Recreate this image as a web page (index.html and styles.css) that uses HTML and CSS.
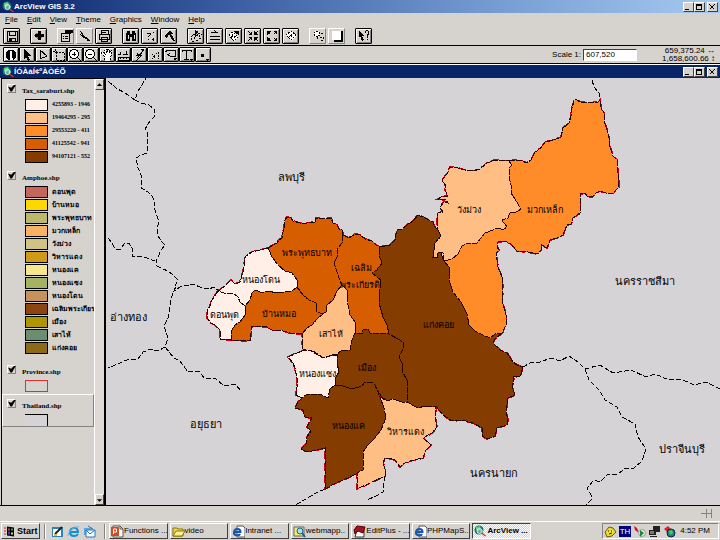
FILE: index.html
```html
<!DOCTYPE html>
<html lang="th">
<head>
<meta charset="utf-8">
<title>ArcView GIS 3.2</title>
<link rel="stylesheet" href="styles.css">
</head>
<body>
<svg class="defs" aria-hidden="true">
  <defs>
    <g id="globe"><circle cx="5" cy="5" r="4.5" fill="#176c70"/><path d="M2 2l4-1 1 3-3 2-2-1zM6 6l3-1-1 3z" fill="#58d66c"/><circle cx="5.500" cy="6" r="2.500" fill="#b7e4e5" fill-opacity=".5" stroke="#d5eeee"/><path d="M7.500 8l4 3" stroke="#d32" stroke-width="1.500"/></g>
    <g id="page"><path d="M2 1h7l3 3v8H2z" fill="#fff" stroke="#555"/><path d="M9 1v3h3" fill="none" stroke="#555"/></g>
    <g id="ie"><path d="M5 1h6l2 2v9H5z" fill="#fff" stroke="#555"/><path d="M1.500 7h7c0-4-6-4-6.500 0s5 4 6 2" fill="none" stroke="#1756b0" stroke-width="2"/></g>
    <g id="areas">
      <path class="c4" d="M268 248L277 243 279 240 282 238 283 232 284 228 285 220 287 217 291 218 293 221 300 223 307 223 315 222 316 218 323 219 331 218 333 223 337 225 339 229 342 230 343 235 342 243 338 248 337 257 334 263 337 272 339 278 342 285 337 291 333 300 327 305 326 312 323 314 317 312 316 303 309 300 303 295 297 287 297 280 292 273 285 271 278 265 272 257z"/>
      <path class="c1" d="M268 248L260 250 252 252 246 256 245 258 244 266 243 272 240 282 235 284 231 280 225 286 218 291 224 293 233 293 238 297 240 302 245 306 250 300 252 293 255 290 263 293 267 291 278 293 292 291 297 287 297 280 292 273 285 271 278 265 272 257z"/>
      <path class="c1" d="M218 291L212 300 210 306 207 311 207 318 211 323 215 325 220 330 220 339 231 340 231 332 235 325 240 322 246 314 245 306 240 302 238 297 233 293 224 293z"/>
      <path class="c4" d="M245 306L246 314 240 322 235 325 231 332 231 340 250 341 252 326 267 327 272 330 280 330 290 333 302 334 307 328 312 325 317 319 323 314 317 312 316 303 309 300 303 295 297 287 292 291 278 293 267 291 263 293 255 290 252 293 250 300z"/>
      <path class="c4" d="M343 235L349 238 352 236 355 234 360 235 365 239 372 241 376 245 380 247 379 255 382 263 377 270 372 273 377 277 381 280 380 289 379 303 383 317 387 325 389 334 380 333 370 333 368 329 363 330 362 334 355 333 355 322 350 315 348 305 347 290 342 285 339 278 337 272 334 263 337 257 338 248 342 243z"/>
      <path class="c2" d="M342 285L337 291 333 300 327 305 326 312 323 314 317 319 312 325 307 328 302 334 302 340 303 349 308 351 315 352 323 358 332 355 337 354 341 351 350 350 352 340 355 333 355 322 350 315 348 305 347 290z"/>
      <path class="c1" d="M288 357L297 353 302 351 310 350 316 354 323 358 330 356 337 355 337 363 339 372 336 377 335 385 330 389 328 398 320 394 307 394 302 398 296 395 297 387 297 378 295 368 293 363z"/>
      <path class="c5" d="M337 355L341 351 350 350 352 340 355 333 362 334 363 330 368 329 370 333 390 333 398 339 403 342 404 347 399 357 403 365 402 371 407 380 407 402 402 402 393 399 387 401 382 397 377 390 375 385 372 382 365 382 362 386 352 389 343 386 335 385 336 377 339 372 337 363z"/>
      <path class="c5" d="M335 385L330 389 328 398 320 394 307 394 302 398 298 402 295 408 303 410 305 417 312 418 309 423 307 427 311 431 307 437 306 444 301 449 305 451 312 451 325 448 325 489 336 483 350 477 363 470 363 452 368 445 375 438 381 430 386 418 384 408 380 397 377 390 375 385 372 382 365 382 362 386 352 389 343 386z"/>
      <path class="c2" d="M380 397L387 401 393 399 402 402 407 402 418 408 425 406 436 407 435 417 437 427 432 433 423 438 431 445 426 450 423 458 418 459 410 461 403 464 400 467 395 460 392 459 385 458 383 463 385 469 385 476 370 483 357 489 357 473 363 470 363 452 368 445 375 438 381 430 386 418 384 408z"/>
      <path class="c5" d="M418 215L413 221 407 225 402 229 398 230 395 236 395 240 390 245 380 247 379 255 382 263 377 270 372 273 377 277 381 280 380 289 379 303 383 317 387 325 389 334 398 339 403 342 404 347 399 357 403 365 402 371 407 380 407 402 418 408 425 406 437 407 443 415 452 421 462 420 473 423 482 428 482 436 487 439 495 436 497 428 507 425 508 420 506 412 508 398 515 395 512 387 514 380 513 376 520 377 523 367 517 365 513 362 507 353 500 350 493 343 495 339 502 333 495 334 490 338 483 335 475 331 469 325 467 314 461 302 453 292 449 280 450 268 443 260 441 252 437 253 437 257 433 257 434 250 435 243 441 236 438 230 434 226 433 222 425 218z"/>
      <path class="c2" d="M437 223L438 213 443 212 440 207 444 202 448 203 446 200 438 199 441 197 448 196 445 190 446 186 442 180 447 174 450 167 458 168 465 170 473 171 480 169 487 163 495 160 509 161 512 165 509 168 509 177 511 185 511 193 515 199 521 209 515 213 510 212 508 218 502 220 507 227 503 230 498 228 485 233 477 243 468 243 462 246 458 254 452 259 444 261 443 253 441 252 437 253 437 257 433 257 434 250 435 243 441 236 438 230z"/>
      <path class="c3" d="M509 161L515 160 522 161 527 163 531 160 535 152 542 147 545 142 554 140 561 137 563 128 569 123 571 116 572 108 574 101 576 99 580 102 589 103 598 102 600 100 601 108 604 113 604 121 607 130 609 138 610 147 613 156 617 160 618 174 619 187 613 193 606 193 600 191 596 193 592 197 587 196 585 193 580 194 580 213 573 218 571 224 567 225 563 235 557 238 550 240 547 248 545 247 541 244 541 250 538 254 528 252 517 251 511 244 505 241 498 242 497 247 499 250 496 253 498 267 502 277 503 290 502 300 506 315 506 325 502 333 495 334 490 338 483 335 475 331 469 325 467 314 461 302 453 292 449 280 450 268 444 261 452 259 458 254 462 246 468 243 477 243 485 233 498 228 503 230 507 227 502 220 508 218 510 212 515 213 521 209 515 199 511 193 511 185 509 177 509 168 512 165z"/>
    </g>
  </defs>
</svg>

<header class="titlebar">
  <svg class="i12" viewBox="0 0 12 12"><use href="#globe"/></svg>
  <h1>ArcView GIS 3.2</h1>
  <div class="winbtns">
    <button aria-label="Minimize"><svg viewBox="0 0 8 8"><path d="M1 6.500h4"/></svg></button>
    <button aria-label="Maximize"><svg viewBox="0 0 8 8"><path d="M1.500 1.500h5v5h-5zM1 2h6"/></svg></button>
    <button aria-label="Close" class="apart"><svg viewBox="0 0 8 8"><path d="M1.500 1.500l5 5m0-5l-5 5"/></svg></button>
  </div>
</header>

<nav class="menu">
  <button><u>F</u>ile</button><button><u>E</u>dit</button><button><u>V</u>iew</button><button><u>T</u>heme</button><button><u>G</u>raphics</button><button><u>W</u>indow</button><button><u>H</u>elp</button>
</nav>

<div class="toolbar">
  <div class="group">
    <button aria-label="Save"><svg viewBox="0 0 14 14"><path d="M2 2h10v10H2zM4 2v4h6V2M4 12V9h6v3" class="s2"/><path d="M5 10h2v2H5z"/></svg></button>
  </div>
  <div class="group">
    <button aria-label="Add theme"><svg viewBox="0 0 14 14"><path d="M2 6l5-3 5 3-5 6z" fill="#777"/><path d="M5.500 2h3v3h3v3h-3v3h-3V8h-3V5h3z"/></svg></button>
  </div>
  <div class="group">
    <button class="flat" aria-label="Theme properties"><svg viewBox="0 0 14 14"><path d="M2 4h8v8H2zM4 7h1m1 0h3M4 9h1m1 0h3" class="s"/><path d="M6 1h6v4l-3-1-3 1zM12 1h2v3h-2z"/></svg></button>
    <button class="flat" aria-label="Edit legend"><svg viewBox="0 0 14 14"><path d="M2 2l4 5 5 5M2 5l6 5" class="s2"/><path d="M8 8l4 4H9z"/></svg></button>
    <button aria-label="Open table"><svg viewBox="0 0 14 14"><path d="M4 5V1h7v4M2 5h10v5H2zM4 8h6v4H4zM5 3h4" class="s2"/></svg></button>
  </div>
  <div class="group">
    <button aria-label="Find"><svg viewBox="0 0 14 14"><path d="M3 2h3v3h2V2h3l1 4v6H8V8H6v4H2V6z"/><path d="M4 6v4m6-4v4" stroke="#ddd"/></svg></button>
    <button aria-label="Query"><svg viewBox="0 0 14 14"><path d="M4 4h3v2L5 8m0 2v1M10 3v1m-1 6h2m-1-1v3" class="s"/></svg></button>
    <button aria-label="Build query"><svg viewBox="0 0 14 14"><path d="M2 7l6-5 3 3-5 1-1 4z"/><path d="M8 5l4 7" class="s2 thick"/></svg></button>
  </div>
  <div class="group">
    <button aria-label="Zoom to full extent"><svg viewBox="0 0 14 14"><path d="M2 11l1-4 3-2 1 3 3-4 3 2M3 12h2m2-1h2m1-2h3M5 8v3m5-5v3" class="s dash"/><path d="M6 1l4 2-4 3z"/></svg></button>
    <button aria-label="Zoom to theme"><svg viewBox="0 0 14 14"><path d="M2 10h10M2 8l4-1 2 1 4-1" class="s"/><path d="M6 1l5 3H3v-1h4z"/></svg></button>
    <button aria-label="Zoom to selected"><svg viewBox="0 0 14 14"><path d="M1 6l5-3 6 5-5 4z" fill="#fff"/><path d="M2 6l4-3 5 5-4 4zM4 8l6-1M5 5l4 6" class="s dash"/><path d="M7 2h5v4L9 5z"/></svg></button>
    <button aria-label="Zoom in"><svg viewBox="0 0 14 14"><path d="M2 2l3 3m7-3L9 5M2 12l3-3m7 3L9 9" class="s2"/><path d="M6 2v4H2zM8 2v4h4zM2 8h4v4zM8 8h4l-4 4z"/></svg></button>
    <button aria-label="Zoom out"><svg viewBox="0 0 14 14"><path d="M2 2l3 3m7-3L9 5M2 12l3-3m7 3L9 9" class="s2"/><path d="M2 6V2h4zM12 6V2H8zM2 8v4h4zM12 8v4H8z"/></svg></button>
    <button aria-label="Previous extent"><svg viewBox="0 0 14 14"><path d="M1 6l6-4 6 4-6 6z" fill="#fff"/><path d="M2 6l5-4 5 4-5 5zM4 4l6 5M10 3L4 9" class="s dash"/></svg></button>
  </div>
  <div class="group">
    <button class="flat" aria-label="Select features"><svg viewBox="0 0 14 14"><circle cx="6" cy="5" r="3" fill="#fff"/><path d="M3 4l2-2 3 1 1 3-3 2-3-2zM6 8v3m4-7h2m-3 4h3v3H9" class="s dash"/></svg></button>
    <button class="flat" aria-label="Clear selection"><svg viewBox="0 0 14 14"><path d="M2 2h9v9H2z" fill="#fff"/><path d="M11 2h2v11H4v-2h7z"/></svg></button>
  </div>
  <div class="group">
    <button aria-label="Context help"><svg viewBox="0 0 14 14"><path d="M2 2l6 5H5l2 4-2 1-2-5-1 1z"/><path d="M8 4c0-3 4-3 4 0L10 7v2m0 1v1" class="s2"/></svg></button>
  </div>
</div>

<div class="tools">
  <div class="toolset">
    <button aria-label="Identify"><svg viewBox="0 0 14 14"><circle cx="7" cy="7" r="5.500"/><path d="M7 3v2m-1 1h1v5m-1 0h3" stroke="#fff" stroke-width="1.500" fill="none"/></svg></button>
    <button aria-label="Pointer"><svg viewBox="0 0 14 14"><path d="M4 1l7 7H8l2 4-2 1-2-4-2 2z"/></svg></button>
    <button aria-label="Vertex edit"><svg viewBox="0 0 14 14"><path d="M4 2l7 6-7 3z" class="s"/></svg></button>
    <button aria-label="Select feature"><svg viewBox="0 0 14 14"><path d="M4 4h8v8H4zM1 3h4M3 1v4" class="s dash"/></svg></button>
    <button aria-label="Zoom in tool"><svg viewBox="0 0 14 14"><circle cx="6" cy="6" r="4.500" fill="#fff" stroke="#000"/><path d="M4 6h4M6 4v4m3 1l4 4" class="s2"/></svg></button>
    <button aria-label="Zoom out tool"><svg viewBox="0 0 14 14"><circle cx="6" cy="6" r="4.500" fill="#fff" stroke="#000"/><path d="M4 6h4m1 3l4 4" class="s2"/></svg></button>
    <button aria-label="Pan"><svg viewBox="0 0 14 14"><path d="M4 8L1 5l2-1 2 2-1-4 2-1 1 4V1h2v4l2-3 1 1-1 5-1 5H5z" fill="#fff" stroke="#000" stroke-dasharray="2 1"/></svg></button>
    <button aria-label="Measure"><svg viewBox="0 0 14 14"><path d="M2 9h11v3H2zM4 9v2m3-2v2m3-2v2M2 6h3m2 0h5M4 4v3m6-4v3" class="s"/></svg></button>
    <button aria-label="Hot link"><svg viewBox="0 0 14 14"><path d="M9 1L5 6h3l-4 7 2-5H4z"/><path d="M9 1h3L8 7h2l-6 6" class="s"/></svg></button>
    <button aria-label="Area of interest"><svg viewBox="0 0 14 14"><path d="M4 6l4 5m1-6l-5 6M10 4v7" class="s dash"/></svg></button>
    <button aria-label="Label"><svg viewBox="0 0 14 14"><path d="M1 4l3-2h7v6H6L3 6M5 5h1" class="s"/><path d="M10 10h3l-2 3z"/></svg></button>
    <button aria-label="Text"><svg viewBox="0 0 14 14"><path d="M2 4V2h9v2M6.500 2v9M4 11h5" class="s2"/><path d="M10 11h3l-2 2z"/></svg></button>
    <button aria-label="Draw point"><svg viewBox="0 0 14 14"><path d="M5 6h3v3H5zM10 11h3l-2 2z"/></svg></button>
  </div>
  <label class="scale">Scale 1: <input type="text" value="607,520"></label>
  <p class="coords"><span>659,375.24 ↔</span><span>1,658,600.66 ↕</span></p>
</div>

<section class="view">
  <header class="viewbar">
    <svg class="i12" viewBox="0 0 12 12"><use href="#globe"/></svg>
    <h2>ÍÓÀàÍ¢ºÀÒÉÕ</h2>
    <div class="winbtns">
      <button aria-label="Minimize view"><svg viewBox="0 0 8 8"><path d="M1 6.500h4"/></svg></button>
      <button aria-label="Restore view"><svg viewBox="0 0 8 8"><path d="M1.500 1.500h5v5h-5zM1 2h6"/></svg></button>
      <button aria-label="Close view" class="apart"><svg viewBox="0 0 8 8"><path d="M1.500 1.500l5 5m0-5l-5 5"/></svg></button>
    </div>
  </header>
  <div class="work">
    <aside class="toc">
      <div class="themes">
        <div class="theme">
          <label><input type="checkbox" checked><span>Tax_saraburi.shp</span></label>
          <ul>
            <li><i class="c1"></i>4255893 - 1946</li><li><i class="c2"></i>19464295 - 295</li><li><i class="c3"></i>29553220 - 411</li><li><i class="c4"></i>41125542 - 941</li><li><i class="c5"></i>94107121 - 552</li>
          </ul>
        </div>
        <div class="theme">
          <label><input type="checkbox" checked><span>Amphoe.shp</span></label>
          <ul class="th">
            <li><i class="a1"></i>ดอนพุด</li><li><i class="a2"></i>บ้านหมอ</li><li><i class="a3"></i>พระพุทธบาท</li><li><i class="a4"></i>มวกเหล็ก</li><li><i class="a5"></i>วังม่วง</li><li><i class="a6"></i>วิหารแดง</li><li><i class="a7"></i>หนองแค</li><li><i class="a8"></i>หนองแซง</li><li><i class="a9"></i>หนองโดน</li><li><i class="a10"></i>เฉลิมพระเกียรติ</li><li><i class="a11"></i>เมือง</li><li><i class="a12"></i>เสาไห้</li><li><i class="a13"></i>แก่งคอย</li>
          </ul>
        </div>
        <div class="theme">
          <label><input type="checkbox" checked><span>Province.shp</span></label>
          <ul><li><i class="red"></i></li></ul>
        </div>
        <div class="theme active">
          <label><input type="checkbox" checked><span>Thailand.shp</span></label>
          <ul><li><i class="plain"></i></li></ul>
        </div>
      </div>
      <div class="scroll"><button aria-label="Scroll up"><svg viewBox="0 0 8 8"><path d="M1 5l3-3 3 3z"/></svg></button><button aria-label="Scroll down"><svg viewBox="0 0 8 8"><path d="M1 3l3 3 3-3z"/></svg></button></div>
    </aside>
    <svg class="map" viewBox="106 78 614 427" preserveAspectRatio="xMidYMid slice" role="img" aria-label="สระบุรี">
      <g class="province">
        <path d="M108 81L116 88 125 93 135 100 138 91 142 85 146 78M135 100L141 103 149 105 155 110 154 117 150 121 145 129 148 133 147 142 147 153 141 155 136 158 138 168 141 175 142 178 141 188 148 192 152 196 155 203 154 207 158 219 158 225 157 234 161 241 165 245 161 250 159 255 156 261 157 266 163 269 168 271 173 275 178 280 175 286 174 291 180 287 193 284 202 288 210 289 213 287 220 291M108 238L112 243 115 249 121 249 124 244 129 243 132 248 132 256 144 257 155 261M176 287L171 298 170 307 168 318 164 326 168 338 165 347 158 351 151 349 143 352 138 359 129 359 120 363 108 368M165 347L174 358 180 361 188 372 199 371 204 378 216 379 224 386 235 384 241 391"/>
        <path d="M592 80L594 87 599 93 600 102M523 367L530 363 540 362 551 358 560 361 569 356 578 362 585 369 600 365 613 373 631 370 646 377 655 374 669 380 681 379 694 385 706 382 720 389M585 369L589 380 600 391 605 400 617 407 622 417 635 424 638 437 646 449 642 461 634 468 626 468 618 474 607 475 600 482 594 480 587 488 591 495 591 500 586 505M325 489L314 494 306 499 295 505M385 476L383 488 383 492 376 496 367 500"/>
      </g>
      <use href="#areas" class="outline"/>
      <use href="#areas" class="lines"/>
      <g class="big">
        <text x="291" y="181">ลพบุรี</text><text x="128" y="321">อ่างทอง</text><text x="206" y="428">อยุธยา</text><text x="494" y="477">นครนายก</text><text x="682" y="453">ปราจีนบุรี</text><text x="645" y="285">นครราชสีมา</text>
      </g>
      <g class="small">
        <text x="469" y="213">วังม่วง</text><text x="545" y="213">มวกเหล็ก</text><text x="307" y="256">พระพุทธบาท</text><text x="261" y="283">หนองโดน</text><text x="224" y="318">ดอนพุด</text><text x="279" y="317">บ้านหมอ</text><text x="361" y="271">เฉลิม</text><text x="360" y="288">พระเกียรติ</text><text x="331" y="337">เสาไห้</text><text x="367" y="371">เมือง</text><text x="317" y="377">หนองแซง</text><text x="438" y="328">แก่งคอย</text><text x="348" y="429">หนองแค</text><text x="405" y="435">วิหารแดง</text>
      </g>
    </svg>
  </div>
</section>

<div class="status"><svg viewBox="0 0 12 10"><path d="M0 4.500h11M5.500 0v9M10.500 0v9"/></svg></div>

<footer class="taskbar">
  <button class="start"><svg viewBox="0 0 13 12"><path d="M1 2h2v1H1zM1 5h2v1H1zM1 8h2v1H1z" fill="#d22"/><path d="M4 1l7 1v9l-7-1z"/><path d="M5 3h2v2H5z" fill="#e33"/><path d="M8 3h2v2H8z" fill="#3a3"/><path d="M5 6h2v3H5z" fill="#24c"/><path d="M8 7h2v2H8z" fill="#dd2"/></svg>Start</button>
  <div class="quick">
    <a href="#" aria-label="Desktop"><svg viewBox="0 0 13 13"><path d="M1 2h11v10H1z" fill="#2d83b5"/><path d="M2 4h8v7H2z" fill="#fff"/><path d="M4 9l7-7" stroke="#222" stroke-width="2"/><path d="M3 9h3v2H3z" fill="#e9b42f"/></svg></a>
    <a href="#" aria-label="Internet Explorer"><svg viewBox="0 0 13 13"><path d="M3 7h8c0-6-8-5-8 0s6 5 8 2" fill="none" stroke="#168fd2" stroke-width="2"/><path d="M1 11C1 6 8 1 12 2" fill="none" stroke="#5ab8e6"/></svg></a>
    <a href="#" aria-label="Outlook Express"><svg viewBox="0 0 13 13"><path d="M1 3h8v7H1z" fill="#5aa7df"/><path d="M3 5h9v7H3z" fill="#fff" stroke="#2876bb"/><path d="M3 5l4 4 5-4M5 1l5 3" fill="none" stroke="#2876bb"/></svg></a>
  </div>
  <div class="tasks">
    <button><svg viewBox="0 0 13 13"><use href="#page"/><path d="M0 2h8v9H0z" fill="#d14c26"/><path d="M2.500 9V4h3v3H3" fill="none" stroke="#fff"/></svg><span>Functions ...</span></button>
    <button><svg viewBox="0 0 13 13"><path d="M1 3h4l1 1h5v7H1z" fill="#f1d64a" stroke="#887400"/><path d="M1 11l3-5h9l-3 5z" fill="#fff38c" stroke="#887400"/></svg><span>video</span></button>
    <button><svg viewBox="0 0 13 13"><use href="#ie"/></svg><span>Intranet ...</span></button>
    <button><svg viewBox="0 0 13 13"><path d="M1 2h10v9H1z" fill="#f5eb74" stroke="#665"/><circle cx="7" cy="6" r="3" fill="#a1def0" stroke="#176096"/><path d="M9 8l3 4" stroke="#176096" stroke-width="2"/></svg><span>webmapp..</span></button>
    <button><svg viewBox="0 0 13 13"><path d="M4 5h7v7H2z" fill="#fff" stroke="#333"/><path d="M1 5l3-4 8 1-2 6-5-2-3 3z" fill="#a51127" stroke="#500"/></svg><span>EditPlus - ...</span></button>
    <button><svg viewBox="0 0 13 13"><use href="#ie"/></svg><span>PHPMapS..</span></button>
    <button class="on"><svg viewBox="0 0 13 13"><use href="#globe"/></svg><span>ArcView ...</span></button>
  </div>
  <div class="tray">
    <svg viewBox="0 0 13 13"><path d="M1 7l4-5 4 1 3 4-4 4-5 1z" fill="#eadc35" stroke="#665b00"/><path d="M4 6h1m2 0h1M5 9l3-1" stroke="#222"/></svg>
    <b>TH</b>
    <svg viewBox="0 0 13 13"><path d="M1 1l3 2 2 5-4-3z" fill="#c13"/><circle cx="9" cy="8" r="3.500" fill="#eee" stroke="#999"/><path d="M7 5l4 3-4 4z" fill="#168b38"/></svg>
    <svg viewBox="0 0 13 13"><path d="M5 1h7v6H5zM1 5h7v5H1zM2 11h7v1H2z" fill="#222"/><path d="M2 6h4v3H2z" fill="#777"/></svg>
    <svg viewBox="0 0 13 13"><path d="M1 4l4-3 3 3-3 4z" fill="#d22"/><circle cx="8" cy="8" r="4" fill="#1b7f8a" stroke="#125"/><path d="M6 6l3-1 1 3-3 2z" fill="#52ca45"/></svg>
    <time>4:52 PM</time>
  </div>
</footer>
</body>
</html>
```
FILE: styles.css
```css
* { box-sizing: border-box; }
body {
  margin: 0;
  height: 100vh;
  display: flex;
  flex-direction: column;
  background: #d6d3ce;
  color: #000;
  font: 8px/12px "Liberation Sans", sans-serif;
  overflow: hidden;
}
button, input { font: inherit; color: inherit; }
button { padding: 0; background: #d6d3ce; border: 0; }
h1, h2, p, ul { margin: 0; padding: 0; list-style: none; }
svg { display: block; }
.defs { width: 0; height: 0; position: absolute; }
.i12 { width: 12px; height: 12px; flex: none; }

.titlebar, .viewbar {
  display: flex;
  align-items: center;
  height: 13px;
  padding: 0 2px;
  color: #fff;
  flex: none;
}
.titlebar { background: linear-gradient(90deg, #0a246a, #3d5fa3 33%, #7399d0 67%, #a6caf0); }
.viewbar { background: #0a246a; }
h1, h2 { font-size: 8px; font-weight: bold; }
.winbtns { display: flex; margin-left: auto; }
.winbtns button {
  width: 11px;
  height: 10px;
  border: 1px solid;
  border-color: #fff #404040 #404040 #fff;
}
.winbtns .apart { margin-left: 2px; }
.winbtns svg { width: 8px; height: 8px; fill: none; stroke: #000; shape-rendering: crispEdges; }

.menu { display: flex; height: 14px; padding-left: 5px; gap: 9px; align-items: center; flex: none; }
.menu button { line-height: 14px; }

.toolbar {
  display: flex;
  gap: 10px;
  height: 19px;
  padding: 1px 3px;
  border-bottom: 1px solid #000;
  flex: none;
}
.group { display: flex; gap: 2px; }
.group button, .toolset button {
  display: flex;
  align-items: center;
  justify-content: center;
  border: 1px solid #000;
  border-radius: 1px;
  box-shadow: inset 1px 1px #fff, inset -1px -1px #848284;
}
.group button { width: 17px; height: 16px; }
.group .flat { border-color: #fff #848284 #848284 #fff; box-shadow: none; }
.group svg, .toolset svg { width: 14px; height: 14px; shape-rendering: crispEdges; flex: none; }
.s, .s2 { fill: none; stroke: #000; stroke-width: 1px; }
.thick { stroke-width: 2px; }
.dash { stroke-dasharray: 2 1; }

.tools {
  display: flex;
  align-items: center;
  height: 18px;
  padding: 0 5px 0 3px;
  border-bottom: 1px solid #000;
  flex: none;
}
.toolset { display: flex; flex: 0 1 202px; }
.toolset button { flex: 1 1 0; min-width: 0; height: 15px; }
.toolset button:first-child { background: #eee; }
.scale { margin-left: auto; display: flex; align-items: center; gap: 2px; }
.scale input {
  width: 54px;
  height: 12px;
  padding: 0 2px;
  background: #fff;
  border: 1px solid;
  border-color: #404040 #fff #fff #404040;
}
.coords { display: flex; flex-direction: column; width: 78px; text-align: right; line-height: 8px; }

.view { flex: 1; min-height: 0; display: flex; flex-direction: column; border-top: 1px solid #fff; border-bottom: 1px solid #000; }
.work { flex: 1; min-height: 0; display: flex; }
.toc {
  width: 105px;
  flex: none;
  display: flex;
  border: 1px solid #000;
  border-width: 1px 2px 0 1px;
  margin-left: 1px;
}
.themes { flex: 1; min-width: 0; overflow: hidden; display: flex; flex-direction: column; gap: 9px; padding-top: 3px; font: bold 6px/13px "Liberation Serif", serif; }
.theme label { display: flex; align-items: center; gap: 6px; padding-left: 5px; height: 12px; font-size: 7px; }
.theme label span { padding-top: 6px; }
.theme ul { padding: 4px 0 0 23px; }
.theme:nth-child(2) { margin-top: -3px; }
.theme li { display: flex; gap: 4px; height: 13px; align-items: center; white-space: nowrap; }
.theme .th li { font: bold 7px/13px "Liberation Sans", sans-serif; }
.theme i { width: 23px; height: 12px; border: 1px solid #000; flex: none; }
.theme input {
  appearance: none;
  margin: 0;
  width: 9px;
  height: 9px;
  border: 1px solid;
  border-color: #fff #848284 #848284 #fff;
}
.theme input:checked::before {
  content: "";
  display: block;
  width: 8px;
  height: 7px;
  background: #000;
  clip-path: polygon(0 30%, 40% 45%, 80% 0, 100% 0, 50% 100%, 30% 100%);
}
.active { border: 1px solid; border-color: #fff #848284 #848284 #fff; margin: -7px 0 0; padding-top: 2px; }
.active label { padding-left: 4px; }
.active ul { padding-left: 22px; }
.c1 { background: #ffefe6; fill: #ffefe6; }
.c2 { background: #ffbe84; fill: #ffbe84; }
.c3 { background: #ff8c29; fill: #ff8c29; }
.c4 { background: #d65d00; fill: #d65d00; }
.c5 { background: #843c00; fill: #843c00; }
.a1 { background: #c6655a; }
.a2 { background: #ffd700; }
.a3 { background: #bdb76b; }
.a4 { background: #f7b263; }
.a5 { background: #cec384; }
.a6 { background: #ce9a18; }
.a7 { background: #f7e78c; }
.a8 { background: #a5b263; }
.a9 { background: #c6925a; }
.a10 { background: #8c4510; }
.a11 { background: #ad9600; }
.a12 { background: #6b8e73; }
.a13 { background: #8c6914; }
.theme .red { border-color: #e03030; }
.theme .plain { background: #d6d3d6; border-width: 1px 1px 0 0; }
.scroll { width: 10px; display: flex; flex-direction: column; justify-content: space-between; border-left: 1px solid #fff; background: #dedbd6; flex: none; }
.scroll button { height: 11px; border: 1px solid; border-color: #fff #404040 #404040 #fff; }
.scroll svg { width: 7px; height: 8px; }

.map { flex: 1; min-width: 0; height: 100%; background: #d6d3d6; shape-rendering: crispEdges; }
.outline { stroke: #c80020; stroke-width: 2px; stroke-dasharray: 8 4; }
.lines { stroke: #200; stroke-width: 1px; stroke-dasharray: 6 1; }
.province { fill: none; stroke: #000; stroke-width: 1px; stroke-dasharray: 5 2; }
.map text { text-anchor: middle; font-family: "Liberation Sans", sans-serif; }
.big { font-size: 11px; }
.small { font-size: 9px; }

.status { height: 15px; flex: none; display: flex; justify-content: flex-end; align-items: center; padding-right: 7px; }
.status svg { width: 12px; height: 10px; fill: none; stroke: #848284; }

.taskbar {
  height: 19px;
  flex: none;
  display: flex;
  align-items: center;
  gap: 4px;
  padding: 1px 1px;
  border-top: 1px solid #fff;
}
.taskbar svg { width: 13px; height: 13px; flex: none; }
.start, .tasks button {
  display: flex;
  align-items: center;
  height: 16px;
  border: 1px solid;
  border-color: #fff #404040 #404040 #fff;
  white-space: nowrap;
}
.start { width: 39px; padding-left: 1px; gap: 1px; font-size: 9px; font-weight: bold; flex: none; }
.quick { display: flex; align-items: center; gap: 3px; height: 15px; width: 61px; padding-left: 6px; border: 1px solid #848284; border-width: 0 1px; box-shadow: 1px 0 #fff, inset 1px 0 #fff; flex: none; }
.tasks { display: flex; gap: 2px; flex: 0 1 422px; min-width: 0; }
.tasks button { flex: 1 1 0; min-width: 0; padding-left: 1px; }
.tasks .on {
  font-weight: bold;
  background: repeating-conic-gradient(#fff 0 25%, #d6d3ce 0 50%) 0 0 / 2px 2px;
  border-color: #404040 #fff #fff #404040;
}
.tray {
  margin-left: auto;
  width: 117px;
  height: 16px;
  display: flex;
  align-items: center;
  gap: 2px;
  padding: 0 8px 0 1px;
  border: 1px solid;
  border-color: #848284 #fff #fff #848284;
  flex: none;
}
.tray b { width: 12px; background: #00007b; color: #fff; font-weight: 400; line-height: 11px; text-align: center; }
.tray time { margin-left: auto; }
```
